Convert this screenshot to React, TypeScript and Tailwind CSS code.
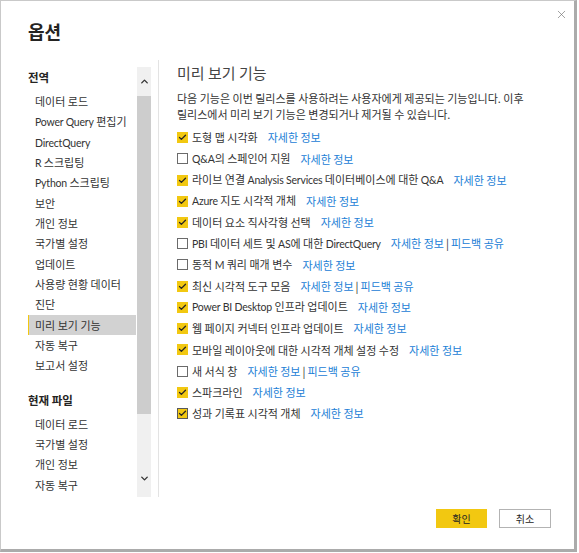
import React from 'react';
import { Check, ChevronUp, ChevronDown, X } from 'lucide-react';

interface PreviewFeature {
  label: string;
  checked: boolean;
  feedback?: boolean;
  focused?: boolean;
}

const globalItems = [
  '데이터 로드',
  'Power Query 편집기',
  'DirectQuery',
  'R 스크립팅',
  'Python 스크립팅',
  '보안',
  '개인 정보',
  '국가별 설정',
  '업데이트',
  '사용량 현황 데이터',
  '진단',
  '미리 보기 기능',
  '자동 복구',
  '보고서 설정',
];

const fileItems = ['데이터 로드', '국가별 설정', '개인 정보', '자동 복구'];

const features: PreviewFeature[] = [
  { label: '도형 맵 시각화', checked: true },
  { label: 'Q&A의 스페인어 지원', checked: false },
  { label: '라이브 연결 Analysis Services 데이터베이스에 대한 Q&A', checked: true },
  { label: 'Azure 지도 시각적 개체', checked: true },
  { label: '데이터 요소 직사각형 선택', checked: true },
  { label: 'PBI 데이터 세트 및 AS에 대한 DirectQuery', checked: false, feedback: true },
  { label: '동적 M 쿼리 매개 변수', checked: false },
  { label: '최신 시각적 도구 모음', checked: true, feedback: true },
  { label: 'Power BI Desktop 인프라 업데이트', checked: true },
  { label: '웹 페이지 커넥터 인프라 업데이트', checked: true },
  { label: '모바일 레이아웃에 대한 시각적 개체 설정 수정', checked: true },
  { label: '새 서식 창', checked: false, feedback: true },
  { label: '스파크라인', checked: true },
  { label: '성과 기록표 시각적 개체', checked: true, focused: true },
];

// latin runs are set a touch smaller so mixed strings keep the dialog's widths
function MixedText({ text }: { text: string }) {
  const parts = text.split(/([A-Za-z&][A-Za-z& ]*[A-Za-z&]|[A-Za-z&])/);
  return (
    <>
      {parts.map((p, i) =>
        /[A-Za-z]/.test(p) ? (
          <span key={i} className="font-[family-name:'Lato','Noto_Sans',sans-serif] text-[10.5px] tracking-[-0.2px]">
            {p}
          </span>
        ) : (
          <React.Fragment key={i}>{p}</React.Fragment>
        )
      )}
    </>
  );
}

function CheckBox({ checked, focused }: { checked: boolean; focused?: boolean }) {
  if (!checked) {
    return <span className="w-[11px] h-[11px] shrink-0 border-[1.5px] border-[#6b6b6b] bg-white" />;
  }
  return (
    <span
      className={`w-[11px] h-[11px] shrink-0 flex items-center justify-center bg-[#f2c811] ${focused ? 'border-[1.5px] border-[#595959]' : ''}`}
    >
      <Check className="w-[9px] h-[9px] text-[#252423]" strokeWidth={3.5} />
    </span>
  );
}

function NavItem({ label, selected }: { label: string; selected?: boolean }) {
  return (
    <div
      className={`h-[20.33px] leading-[20.33px] pl-[6px] text-[11px] text-[#333] whitespace-nowrap border-l-[1.5px] ${selected ? 'bg-[#d2d2d2] border-[#f2c811]' : 'border-transparent'}`}
    >
      <MixedText text={label} />
    </div>
  );
}

export default function App() {
  return (
    <div className="w-[579px] h-[553px] bg-white font-[family-name:'Noto_Sans_CJK_KR','Noto_Sans',sans-serif]">
      <div className="w-[577px] h-[552px] border-t border-l border-[#c9c9c9] border-r-[3px] border-b-[3px] border-r-[#ababab] border-b-[#ababab] flex flex-col">
        {/* title bar */}
        <div className="h-[59px] flex justify-between">
          <div className="pl-[27px] pt-[17px] text-[18px] font-bold text-[#252423] leading-[26px]">옵션</div>
          <button className="mt-[7px] mr-[6px] w-[13px] h-[13px] flex items-center justify-center text-[#707070]">
            <X className="w-[13px] h-[13px]" strokeWidth={1.2} />
          </button>
        </div>

        {/* body */}
        <div className="h-[437px] flex">
          <div className="ml-[27px] w-[108px] pt-[7px]">
            <div className="h-[20px] leading-[20px] text-[11.5px] font-bold text-[#252423]">전역</div>
            <div className="mt-[4px]">
              {globalItems.map(item => (
                <NavItem key={item} label={item} selected={item === '미리 보기 기능'} />
              ))}
            </div>
            <div className="mt-[14px] h-[20px] leading-[20px] text-[11.5px] font-bold text-[#252423]">현재 파일</div>
            <div className="mt-[4px]">
              {fileItems.map(item => (
                <NavItem key={item} label={item} />
              ))}
            </div>
          </div>

          {/* scrollbar */}
          <div className="ml-px mt-[7px] w-[14px] bg-[#f0f0f0] flex flex-col">
            <div className="h-[29px] flex items-center justify-center">
              <ChevronUp className="w-[11px] h-[11px] text-[#333]" strokeWidth={3} />
            </div>
            <div className="h-[318px] bg-[#cdcdcd]" />
            <div className="flex-1 flex items-end justify-center pb-[13px]">
              <ChevronDown className="w-[11px] h-[11px] text-[#333]" strokeWidth={3} />
            </div>
          </div>

          <div className="ml-[7px] w-px bg-[#e3e3e3]" />

          {/* content */}
          <div className="pl-[18px] pt-[2px] flex-1">
            <div className="h-[22px] leading-[22px] text-[15px] text-[#444]">미리 보기 기능</div>
            <div className="mt-[6px] text-[11px] leading-[16px] text-[#333]">
              다음 기능은 이번 릴리스를 사용하려는 사용자에게 제공되는 기능입니다. 이후
              <br />
              릴리스에서 미리 보기 기능은 변경되거나 제거될 수 있습니다.
            </div>
            <div className="mt-[5px]">
              {features.map(f => (
                <div key={f.label} className="h-[21.23px] flex items-center text-[11px] whitespace-nowrap">
                  <CheckBox checked={f.checked} focused={f.focused} />
                  <span className="ml-[4px] text-[#333]">
                    <MixedText text={f.label} />
                  </span>
                  <span className="ml-[10px] text-[#2280d6]">자세한 정보</span>
                  {f.feedback && (
                    <>
                      <span className="mx-[2px] text-[#333]">|</span>
                      <span className="text-[#2280d6]">피드백 공유</span>
                    </>
                  )}
                </div>
              ))}
            </div>
          </div>
        </div>

        {/* footer */}
        <div className="flex-1 flex justify-end items-start pt-[12px] pr-[23px] gap-[12px]">
          <button className="w-[51px] h-[19px] bg-[#f2c811] text-[10px] text-[#252423] leading-[19px]">확인</button>
          <button className="w-[52px] h-[19px] bg-white border-[1.5px] border-[#b3b3b3] text-[10px] text-[#252423] leading-[16px]">취소</button>
        </div>
      </div>
    </div>
  );
}
